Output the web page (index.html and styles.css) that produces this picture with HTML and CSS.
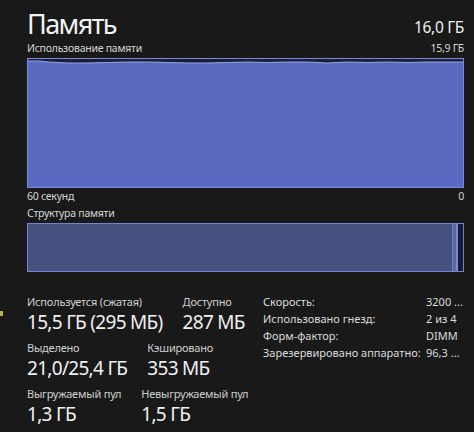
FILE: index.html
```html
<!DOCTYPE html>
<html lang="ru">
  <head>
    <meta charset="UTF-8" />
    <meta name="viewport" content="width=device-width, initial-scale=1.0" />
    <title>Память</title>
    <link rel="stylesheet" href="styles.css">
  </head>
  <body>
    <span class="edge-mark"></span>
    <div class="panel">
      <div class="header">
        <h1>Память</h1>
        <span class="total">16,0 ГБ</span>
      </div>
      <div class="caption">
        <span>Использование памяти</span>
        <span>15,9 ГБ</span>
      </div>
      <div class="graph">
        <svg viewBox="0 0 436 128" preserveAspectRatio="none">
          <path class="area" d="M0 2 L12 2 L20 3 L40 4 L60 4 L80 3.5 L100 3 L120 3 L140 3.5 L160 4 L180 4 L200 3.5 L220 3 L240 3.5 L260 3 L280 3 L300 4 L320 3 L340 3.5 L360 3 L380 3.5 L400 3 L420 3 L436 3 L436 128 L0 128 Z" />
          <path class="line" d="M0 2 L12 2 L20 3 L40 4 L60 4 L80 3.5 L100 3 L120 3 L140 3.5 L160 4 L180 4 L200 3.5 L220 3 L240 3.5 L260 3 L280 3 L300 4 L320 3 L340 3.5 L360 3 L380 3.5 L400 3 L420 3 L436 3" />
        </svg>
      </div>
      <div class="caption axis">
        <span>60 секунд</span>
        <span>0</span>
      </div>
      <div class="caption">
        <span>Структура памяти</span>
      </div>
      <div class="structure">
        <div class="used"></div>
        <div class="modified"></div>
        <div class="standby"></div>
        <div class="free"></div>
      </div>

      <div class="details">
        <div class="stats">
          <div class="row">
            <div class="stat">
              <div class="label">Используется (сжатая)</div>
              <div class="value">15,5 ГБ (295 МБ)</div>
            </div>
            <div class="stat">
              <div class="label">Доступно</div>
              <div class="value">287 МБ</div>
            </div>
          </div>
          <div class="row">
            <div class="stat">
              <div class="label">Выделено</div>
              <div class="value">21,0/25,4 ГБ</div>
            </div>
            <div class="stat">
              <div class="label">Кэшировано</div>
              <div class="value">353 МБ</div>
            </div>
          </div>
          <div class="row">
            <div class="stat">
              <div class="label">Выгружаемый пул</div>
              <div class="value">1,3 ГБ</div>
            </div>
            <div class="stat">
              <div class="label">Невыгружаемый пул</div>
              <div class="value">1,5 ГБ</div>
            </div>
          </div>
        </div>
        <div class="info">
          <span>Скорость:</span><span>3200 ...</span>
          <span>Использовано гнезд:</span><span>2 из 4</span>
          <span>Форм-фактор:</span><span>DIMM</span>
          <span>Зарезервировано аппаратно:</span><span>96,3 ...</span>
        </div>
      </div>
    </div>
  </body>
</html>
```

FILE: styles.css
```css
* {
  box-sizing: border-box;
}
body {
  margin: 0;
  height: 100vh;
  overflow: hidden;
  background-color: #191919;
  color: #e6e6e6;
  font-family: "Noto Sans", "Open Sans", sans-serif;
  position: relative;
}
.edge-mark {
  position: absolute;
  left: 0;
  top: 311px;
  width: 3px;
  height: 5px;
  background: #c8b040;
}
.panel {
  padding: 7px 10px 0 27px;
}
.header {
  display: flex;
  justify-content: space-between;
  align-items: flex-end;
  height: 33px;
}
h1 {
  margin: 0;
  font-size: 27px;
  font-weight: 400;
  line-height: 33px;
  letter-spacing: -1.6px;
  color: #f2f2f2;
}
.total {
  font-size: 15.5px;
  line-height: 20px;
  margin-bottom: 3px;
  letter-spacing: -0.3px;
  color: #f0f0f0;
}
.caption {
  display: flex;
  justify-content: space-between;
  font-size: 10.5px;
  line-height: 17px;
  letter-spacing: -0.25px;
  color: #d6d6d6;
}
.graph {
  height: 130px;
  margin-top: 1px;
  border: 1px solid #7a88dc;
  background: #1c1f33;
  background-image: linear-gradient(90deg, rgba(255, 255, 255, 0.04) 1px, transparent 1px);
  background-size: 43.6px 100%;
}
.graph svg {
  display: block;
  width: 100%;
  height: 100%;
}
.area {
  fill: #5b69c0;
}
.line {
  fill: none;
  stroke: #97a3e8;
  stroke-width: 1;
  vector-effect: non-scaling-stroke;
}
.axis {
  margin-top: 0;
}
.structure {
  display: flex;
  height: 49px;
  margin-top: 1px;
  border: 1px solid #7482d0;
}
.used {
  flex: 1;
  background: #45527f;
  border-right: 1px solid #6d7cc8;
}
.modified {
  width: 3px;
  background: #5a68a8;
}
.standby {
  width: 2px;
  background: #7c8acc;
}
.free {
  width: 5px;
  background: #161b33;
}
.details {
  display: flex;
  align-items: flex-start;
  margin-top: 22px;
}
.stats {
  width: 236px;
  display: flex;
  flex-direction: column;
  gap: 4px;
}
.row {
  display: flex;
  gap: 20px;
  white-space: nowrap;
}
.label {
  font-size: 11px;
  line-height: 15px;
  letter-spacing: -0.2px;
  color: #cfcfcf;
}
.value {
  font-size: 19px;
  line-height: 27px;
  letter-spacing: -0.7px;
  color: #f0f0f0;
}
.info {
  display: grid;
  grid-template-columns: 163px auto;
  font-size: 11px;
  line-height: 17px;
  color: #dcdcdc;
  white-space: nowrap;
  margin-top: -1px;
}
```
